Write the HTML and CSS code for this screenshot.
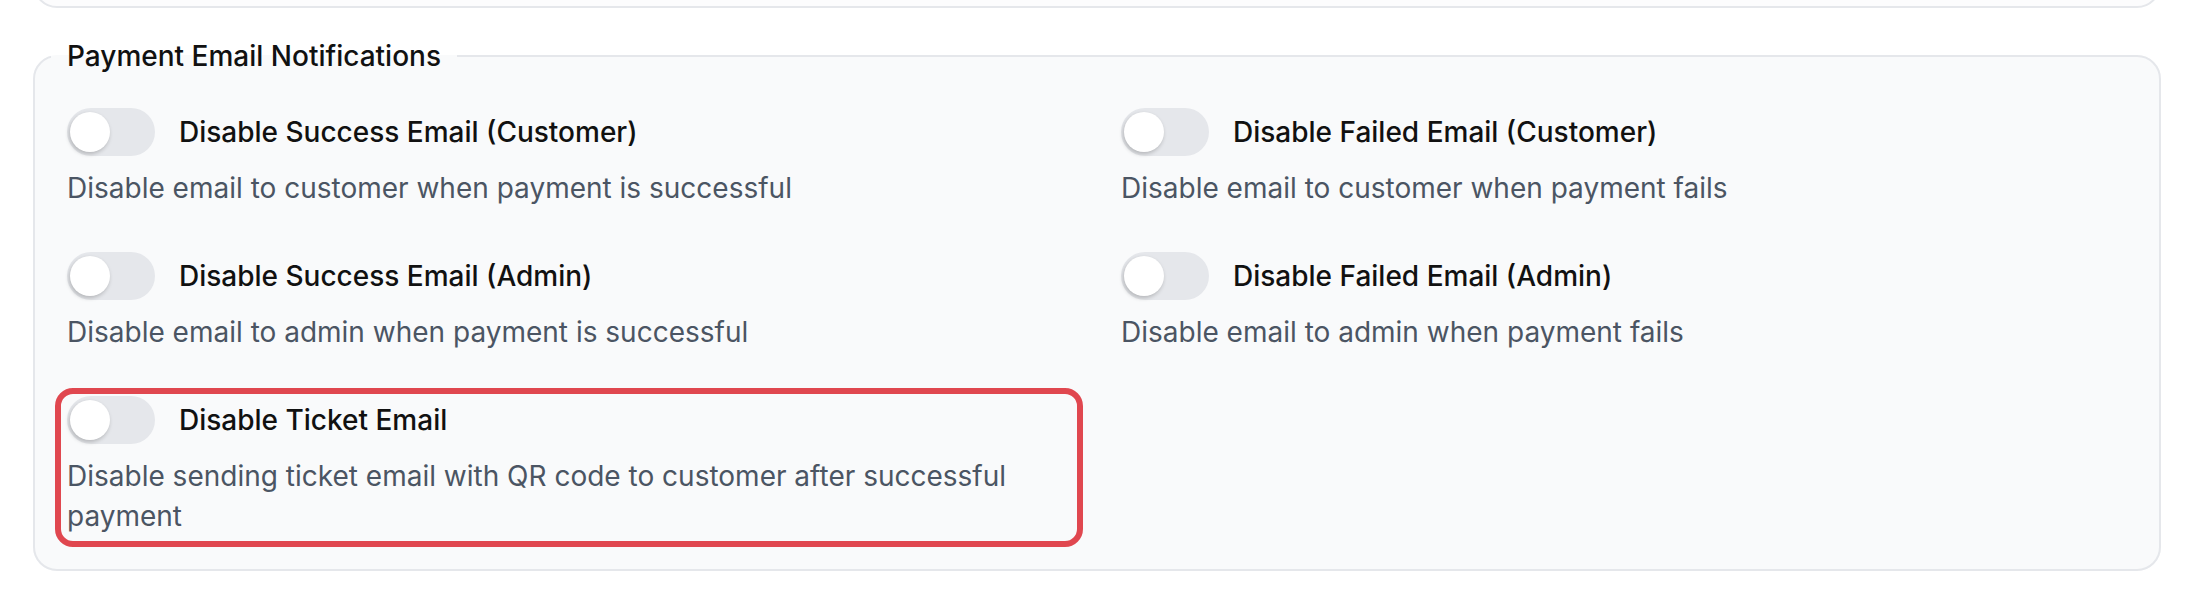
FILE: index.html
```html
<!DOCTYPE HTML>
<html>
<head>
  <title>Payment Settings</title>
  <meta charset="UTF-8" name="viewport" content="width=device-width, initial-scale=1">
  <link rel="stylesheet" href="styles.css">
</head>
<body>
  <div class="page">
    <div class="card-above"></div>
    <fieldset class="group">
      <legend>Payment Email Notifications</legend>
      <div class="grid">
        <div class="option">
          <label class="switch-row">
            <span class="switch"><span class="knob"></span></span>
            <span class="title">Disable Success Email (Customer)</span>
          </label>
          <p class="desc">Disable email to customer when payment is successful</p>
        </div>
        <div class="option">
          <label class="switch-row">
            <span class="switch"><span class="knob"></span></span>
            <span class="title">Disable Failed Email (Customer)</span>
          </label>
          <p class="desc">Disable email to customer when payment fails</p>
        </div>
        <div class="option">
          <label class="switch-row">
            <span class="switch"><span class="knob"></span></span>
            <span class="title">Disable Success Email (Admin)</span>
          </label>
          <p class="desc">Disable email to admin when payment is successful</p>
        </div>
        <div class="option">
          <label class="switch-row">
            <span class="switch"><span class="knob"></span></span>
            <span class="title">Disable Failed Email (Admin)</span>
          </label>
          <p class="desc">Disable email to admin when payment fails</p>
        </div>
        <!-- highlighted option -->
        <div class="option highlight">
          <label class="switch-row">
            <span class="switch"><span class="knob"></span></span>
            <span class="title">Disable Ticket Email</span>
          </label>
          <p class="desc">Disable sending ticket email with QR code to customer after successful payment</p>
        </div>
      </div>
    </fieldset>
  </div>
</body>
</html>
```

FILE: styles.css
```css
html {
  font-family: 'Inter', 'Noto Sans', sans-serif;
  background-color: #ffffff;
  color: #111111;
}
body {
  margin: 0;
}
.page {
  padding: 0 31px 0 33px;
  overflow: hidden;
}
.card-above {
  height: 100px;
  margin-top: -96px;
  background-color: #fcfcfd;
  border: 2px solid #e5e7eb;
  border-radius: 24px;
}
.group {
  margin: 28px 0 0 0;
  padding: 32px 32px 33px 32px;
  background-color: #f9fafb;
  border: 2px solid #e5e7eb;
  border-radius: 24px;
}
.group legend {
  margin-left: -16px;
  padding: 0 16px;
  font-size: 28px;
  line-height: 40px;
  font-weight: 500;
  color: #111111;
}
.grid {
  display: grid;
  grid-template-columns: 1fr 1fr;
  column-gap: 48px;
  row-gap: 44px;
}
.option {
  position: relative;
}
.switch-row {
  display: flex;
  align-items: center;
  height: 48px;
  cursor: pointer;
}
.switch {
  position: relative;
  flex: none;
  width: 88px;
  height: 48px;
  border-radius: 24px;
  background-color: #e5e7eb;
}
.knob {
  position: absolute;
  top: 4px;
  left: 3px;
  width: 40px;
  height: 40px;
  border-radius: 50%;
  background-color: #ffffff;
  box-shadow: -1px 2px 4px rgba(0, 0, 0, 0.22);
}
.title {
  margin-left: 24px;
  font-size: 28px;
  line-height: 40px;
  font-weight: 500;
  color: #111111;
}
.desc {
  margin: 12px 0 0 0;
  font-size: 28px;
  line-height: 40px;
  color: #4b5563;
}
.highlight::after {
  content: "";
  position: absolute;
  top: -8px;
  bottom: -11px;
  left: -12px;
  right: -10px;
  border: 6px solid #e0474f;
  border-radius: 18px;
  pointer-events: none;
}
```
